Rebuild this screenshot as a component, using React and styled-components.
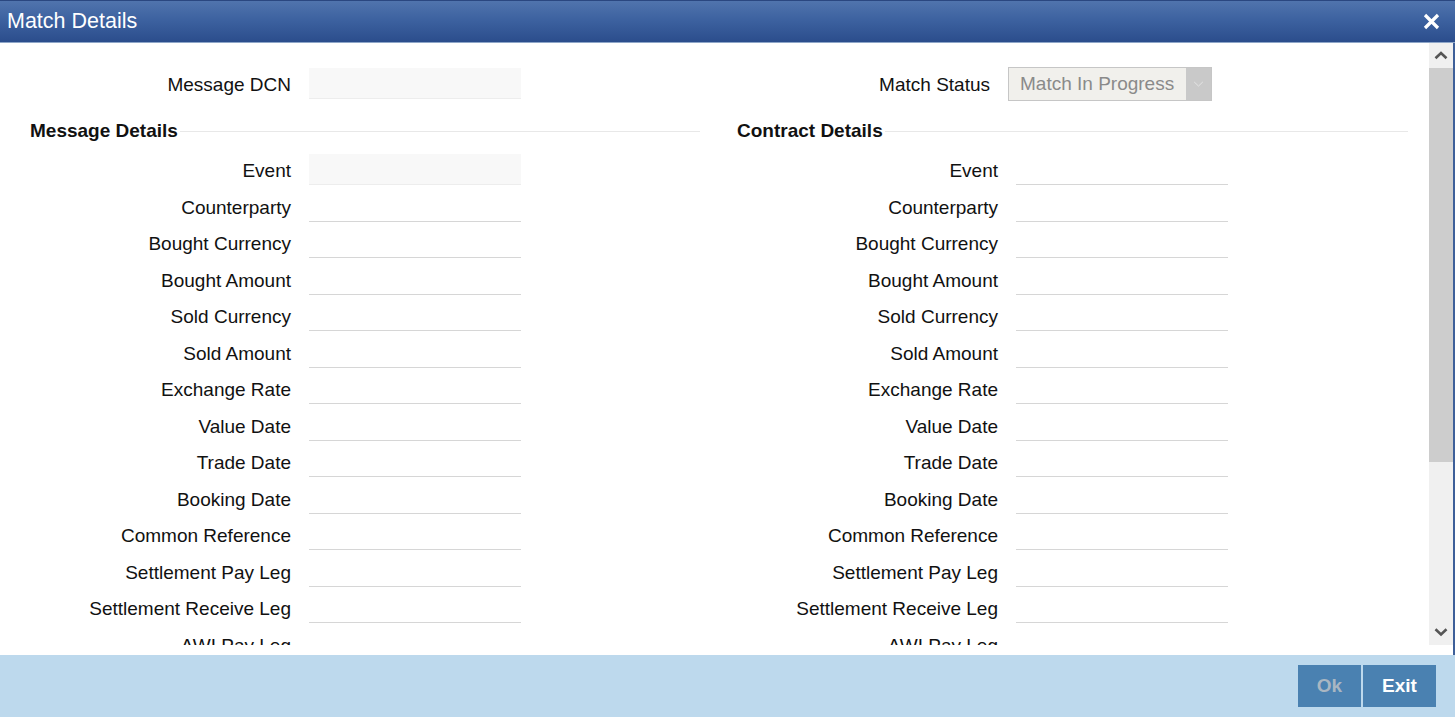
import React from "react";
import styled, { createGlobalStyle } from "styled-components";

const GlobalStyle = createGlobalStyle`
  html, body {
    margin: 0;
    padding: 0;
    overflow: hidden;
    background: #ffffff;
  }
  body {
    font-family: "Liberation Sans", Arial, sans-serif;
  }
`;

const Window = styled.div`
  width: 1455px;
  height: 717px;
  display: flex;
  flex-direction: column;
  background: #ffffff;
  font-family: "Liberation Sans", Arial, sans-serif;
`;

const TitleBar = styled.div`
  flex: none;
  display: flex;
  align-items: center;
  justify-content: space-between;
  padding: 0 13px 0 7px;
  background: linear-gradient(to bottom, #5074ad 0%, #3d62a0 45%, #2b4d8c 100%);
  border-top: 1px solid #2a4780;
  border-bottom: 1px solid #8ea6c8;
  box-sizing: border-box;
  height: 43px;
`;

const Title = styled.h1`
  margin: 0;
  font-size: 21.5px;
  font-weight: normal;
  color: #ffffff;
`;

const CloseButton = styled.button`
  width: 22px;
  height: 22px;
  padding: 0;
  border: none;
  background: transparent;
  display: flex;
  align-items: center;
  justify-content: center;
  cursor: pointer;
`;

const Body = styled.div`
  flex: 1;
  display: flex;
  flex-direction: column;
  padding-bottom: 10px;
  border-right: 2px solid #3d5f99;
  min-height: 0;
`;

const ScrollArea = styled.div`
  flex: 1;
  display: flex;
  min-height: 0;
`;

const Viewport = styled.div`
  flex: 1;
  overflow: hidden;
  padding: 22px 20px 0 30px;
`;

const Columns = styled.div`
  display: grid;
  grid-template-columns: 670px 671px;
  column-gap: 37px;
`;

const Section = styled.div`
  display: flex;
  flex-direction: column;
`;

const SectionTitle = styled.div`
  height: 50px;
  box-sizing: border-box;
  padding-top: 18px;
  display: flex;
  align-items: flex-start;
  font-size: 19px;
  line-height: 22px;
  font-weight: bold;
  color: #111111;

  &::after {
    content: "";
    flex: 1;
    margin: 11px 0 0 2px;
    border-top: 1px solid #e8e8e8;
  }
`;

const Row = styled.div`
  height: 36.5px;
  display: flex;
  align-items: center;
`;

const Label = styled.label`
  width: ${(p) => p.$width}px;
  flex: none;
  text-align: right;
  font-size: 19px;
  line-height: 22px;
  color: #111111;
  white-space: nowrap;
  padding-top: 3px;
`;

const TextInput = styled.div`
  width: 212px;
  height: 31px;
  margin-left: 18px;
  box-sizing: border-box;
  background: ${(p) => (p.$disabled ? "#f8f8f8" : "#ffffff")};
  border-bottom: 1px solid ${(p) => (p.$disabled ? "#ededed" : "#d6d6d6")};
`;

const Select = styled.div`
  width: 204px;
  height: 34px;
  margin-left: 18px;
  margin-top: 2px;
  box-sizing: border-box;
  display: flex;
  border: 1px solid #c6c6c6;
  background: #f1f0ec;
`;

const SelectValue = styled.div`
  flex: 1;
  padding-left: 11px;
  display: flex;
  align-items: center;
  font-size: 19px;
  color: #8a8a8a;
  white-space: nowrap;
`;

const SelectArrow = styled.div`
  width: 25px;
  background: #c9c9c9;
  display: flex;
  align-items: center;
  justify-content: center;
`;

const Scrollbar = styled.div`
  width: 24px;
  flex: none;
  display: flex;
  flex-direction: column;
  background: #f0f0f0;
`;

const ScrollButton = styled.div`
  height: 25px;
  flex: none;
  display: flex;
  align-items: center;
  justify-content: center;
  background: #f0f0f0;
`;

const ScrollTrack = styled.div`
  flex: 1;
  display: flex;
  flex-direction: column;
`;

const Thumb = styled.div`
  height: 394px;
  background: #cdcdcd;
`;

const Footer = styled.div`
  height: 62px;
  flex: none;
  display: flex;
  align-items: center;
  justify-content: flex-end;
  gap: 2px;
  padding-right: 19px;
  background: #bdd9ed;
`;

const FooterButton = styled.button`
  height: 42px;
  width: ${(p) => p.$width}px;
  border: none;
  padding: 0;
  background: #4a81b1;
  color: ${(p) => (p.disabled ? "#a9b6c2" : "#ffffff")};
  font-family: "Liberation Sans", Arial, sans-serif;
  font-size: 19px;
  font-weight: bold;
  cursor: ${(p) => (p.disabled ? "default" : "pointer")};
`;

const fields = [
  "Event",
  "Counterparty",
  "Bought Currency",
  "Bought Amount",
  "Sold Currency",
  "Sold Amount",
  "Exchange Rate",
  "Value Date",
  "Trade Date",
  "Booking Date",
  "Common Reference",
  "Settlement Pay Leg",
  "Settlement Receive Leg",
  "AWI Pay Leg",
  "AWI Receive Leg",
];

function Chevron({ up, color = "#555", size = 14, width = 2.6 }) {
  return (
    <svg width={size} height={size * 0.6} viewBox="0 0 14 8">
      <path
        d={up ? "M1.5 7 L7 1.8 L12.5 7" : "M1.5 1 L7 6.2 L12.5 1"}
        fill="none"
        stroke={color}
        strokeWidth={width}
      />
    </svg>
  );
}

function DetailSection({ title, side }) {
  return (
    <Section>
      <SectionTitle>{title}</SectionTitle>
      {fields.map((name, i) => (
        <Row key={name}>
          <Label $width={261}>{name}</Label>
          <TextInput $disabled={side === "message" && i === 0} />
        </Row>
      ))}
    </Section>
  );
}

export default function App() {
  return (
    <>
      <GlobalStyle />
      <Window>
        <TitleBar>
          <Title>Match Details</Title>
          <CloseButton aria-label="Close">
            <svg width="17" height="17" viewBox="0 0 17 17">
              <path d="M2 2 L15 15 M15 2 L2 15" stroke="#ffffff" strokeWidth="3.2" />
            </svg>
          </CloseButton>
        </TitleBar>
        <Body>
          <ScrollArea>
            <Viewport>
              <Columns>
                <Row>
                  <Label $width={261}>Message DCN</Label>
                  <TextInput $disabled />
                </Row>
                <Row>
                  <Label $width={253}>Match Status</Label>
                  <Select>
                    <SelectValue>Match In Progress</SelectValue>
                    <SelectArrow>
                      <Chevron color="#e6e6e6" size={11} width={1.2} />
                    </SelectArrow>
                  </Select>
                </Row>
              </Columns>
              <Columns>
                <DetailSection title="Message Details" side="message" />
                <DetailSection title="Contract Details" side="contract" />
              </Columns>
            </Viewport>
            <Scrollbar>
              <ScrollButton>
                <Chevron up />
              </ScrollButton>
              <ScrollTrack>
                <Thumb />
              </ScrollTrack>
              <ScrollButton>
                <Chevron />
              </ScrollButton>
            </Scrollbar>
          </ScrollArea>
        </Body>
        <Footer>
          <FooterButton $width={63} disabled>
            Ok
          </FooterButton>
          <FooterButton $width={73}>Exit</FooterButton>
        </Footer>
      </Window>
    </>
  );
}
